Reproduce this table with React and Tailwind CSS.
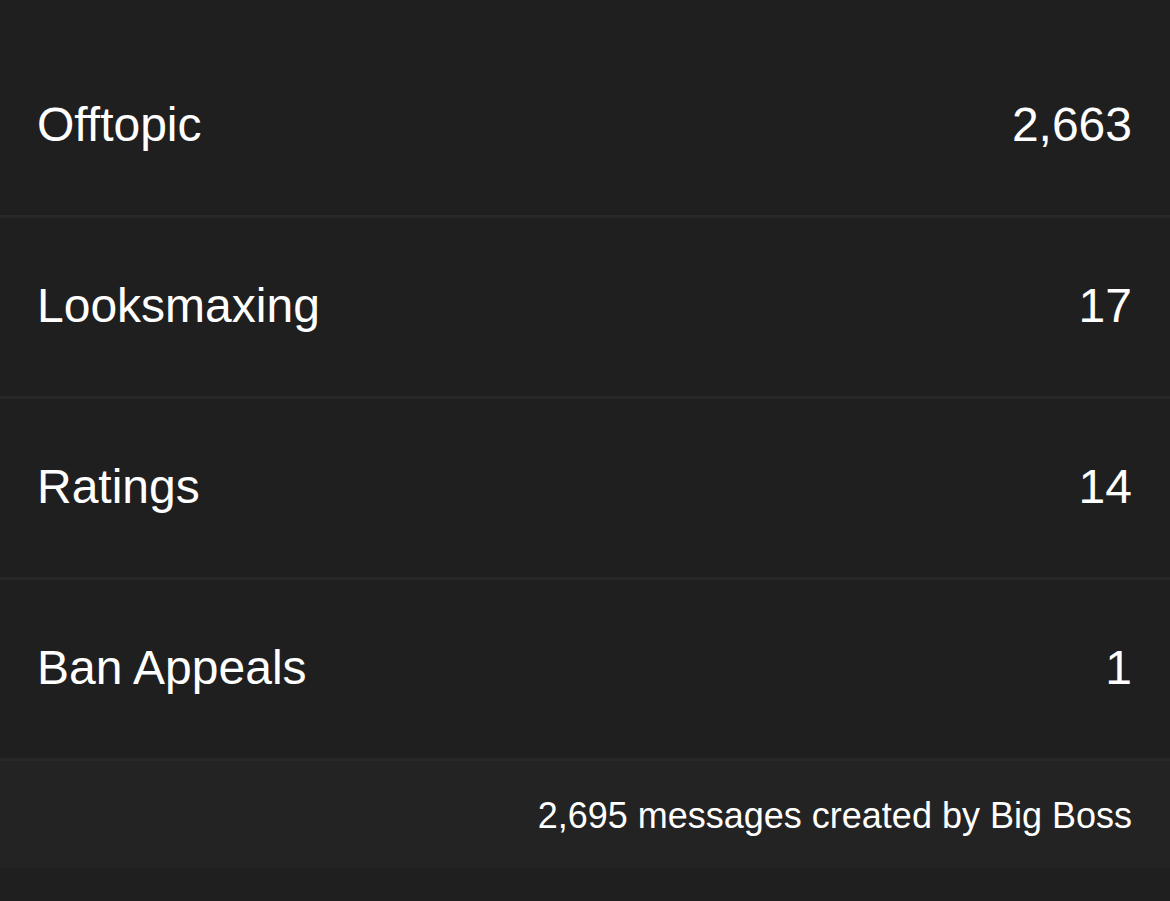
import React from "react";

const rows = [
  { name: "Offtopic", count: "2,663" },
  { name: "Looksmaxing", count: "17" },
  { name: "Ratings", count: "14" },
  { name: "Ban Appeals", count: "1" },
];

const App = () => {
  return (
    <div className="min-h-[901px] bg-[#1f1f1f] pt-[37px] text-white font-['Liberation_Sans',Arial,sans-serif]">
      {rows.map((row) => (
        <div
          key={row.name}
          className="flex h-[181px] items-center justify-between border-b-[3px] border-[#282828] px-[37px] pb-[3px] text-[48px] leading-none"
        >
          <span>{row.name}</span>
          <span className="pr-[1px]">{row.count}</span>
        </div>
      ))}
      <div className="flex h-[107px] items-center justify-end bg-[#232323] px-[38px] pt-[2px] text-[36px] leading-none">
        2,695 messages created by Big Boss
      </div>
    </div>
  );
};

export default App;
